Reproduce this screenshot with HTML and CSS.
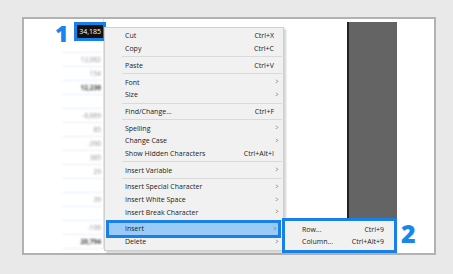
FILE: index.html
```html
<!DOCTYPE html>
<html>
<head>
<meta charset="utf-8">
<link rel="stylesheet" href="styles.css">
</head>
<body>
<div class="panel">
  <div class="numbers">
    <div class="row"><span class="sel">34,185</span></div>
    <div class="row"></div>
    <div class="row">12,082</div>
    <div class="row">154</div>
    <div class="row total">12,236</div>
    <div class="row"></div>
    <div class="row">-6,669</div>
    <div class="row">85</div>
    <div class="row">-390</div>
    <div class="row">385</div>
    <div class="row">29</div>
    <div class="row"></div>
    <div class="row">39</div>
    <div class="row"></div>
    <div class="row">-106</div>
    <div class="row total">20,794</div>
  </div>
  <div class="dark"></div>

  <div class="callout c1">1</div>

  <div class="menu">
    <div class="item"><span class="lbl">Cut</span><span class="key">Ctrl+X</span><span class="arr"></span></div>
    <div class="item"><span class="lbl">Copy</span><span class="key">Ctrl+C</span><span class="arr"></span></div>
    <div class="sep"></div>
    <div class="item"><span class="lbl">Paste</span><span class="key">Ctrl+V</span><span class="arr"></span></div>
    <div class="sep"></div>
    <div class="item"><span class="lbl">Font</span><span class="key"></span><span class="arr">&gt;</span></div>
    <div class="item"><span class="lbl">Size</span><span class="key"></span><span class="arr">&gt;</span></div>
    <div class="sep"></div>
    <div class="item"><span class="lbl">Find/Change...</span><span class="key">Ctrl+F</span><span class="arr"></span></div>
    <div class="sep"></div>
    <div class="item"><span class="lbl">Spelling</span><span class="key"></span><span class="arr">&gt;</span></div>
    <div class="item"><span class="lbl">Change Case</span><span class="key"></span><span class="arr">&gt;</span></div>
    <div class="item"><span class="lbl">Show Hidden Characters</span><span class="key">Ctrl+Alt+I</span><span class="arr"></span></div>
    <div class="sep"></div>
    <div class="item"><span class="lbl">Insert Variable</span><span class="key"></span><span class="arr">&gt;</span></div>
    <div class="sep"></div>
    <div class="item"><span class="lbl">Insert Special Character</span><span class="key"></span><span class="arr">&gt;</span></div>
    <div class="item"><span class="lbl">Insert White Space</span><span class="key"></span><span class="arr">&gt;</span></div>
    <div class="item"><span class="lbl">Insert Break Character</span><span class="key"></span><span class="arr">&gt;</span></div>
    <div class="sep"></div>
    <div class="item active"><span class="lbl">Insert</span><span class="key"></span><span class="arr">&gt;</span></div>
    <div class="item"><span class="lbl">Delete</span><span class="key"></span><span class="arr">&gt;</span></div>
  </div>

  <div class="submenu">
    <div class="sitem"><span class="lbl">Row...</span><span class="key">Ctrl+9</span></div>
    <div class="sitem"><span class="lbl">Column...</span><span class="key">Ctrl+Alt+9</span></div>
  </div>

  <div class="callout c2">2</div>
</div>
</body>
</html>
```

FILE: styles.css
```css
html, body {
  margin: 0;
  padding: 0;
}
body {
  width: 453px;
  height: 274px;
  background: #e9e9e9;
  font-family: "Open Sans", "Noto Sans", sans-serif;
  overflow: hidden;
}
.panel {
  position: relative;
  margin: 17px 0 0 22px;
  width: 410px;
  height: 234px;
  border: 2px solid #b2b2b2;
  background: #ffffff;
  display: flex;
  align-items: flex-start;
}
.numbers {
  margin-left: 38px;
  padding-top: 6px;
  width: 41px;
  border-right: 1px solid #d6e4f6;
  display: flex;
  flex-direction: column;
}
.row {
  height: 13px;
  border-bottom: 1px solid #e6eef9;
  text-align: right;
  padding-right: 2px;
  font-size: 6.5px;
  line-height: 13px;
  color: #8f8f8f;
  filter: blur(0.8px);
}
.row:first-child {
  filter: none;
  border-bottom-color: #ffffff;
}
.row.total {
  color: #3a3a3a;
  font-weight: 700;
}
.sel {
  display: inline-block;
  background: #111;
  color: #fff;
  font-size: 7px;
  line-height: 11px;
  padding: 0 1px;
  margin-right: -1px;
  box-shadow: 0 0 0 1px #111, 0 0 0 4px #1880e8;
}
.dark {
  margin-left: auto;
  margin-right: 37px;
  margin-top: 3px;
  width: 48px;
  height: 222px;
  background: #646464;
  border-left: 2px solid #222;
}
.callout {
  position: absolute;
  color: #1a85ea;
  font-family: "Open Sans", sans-serif;
  font-weight: 800;
  font-size: 23px;
  line-height: 1;
}
.c1 {
  left: 31px;
  top: 3px;
}
.c2 {
  left: 377px;
  top: 202px;
  font-size: 25px;
}
.menu {
  position: absolute;
  left: 80px;
  top: 8px;
  width: 178px;
  padding: 1.6px 0 2px;
  background: #f1f1f1;
  border: 1px solid #cfcfcf;
  box-shadow: 2px 2px 2px rgba(0, 0, 0, 0.18);
  font-size: 7px;
  color: #1b1b1b;
}
.item {
  height: 12.7px;
  display: flex;
  align-items: center;
  padding: 0 3px 0 20px;
}
.item .lbl {
  flex: 1;
}
.item .key {
  text-align: right;
}
.item .arr {
  width: 6px;
  text-align: center;
  color: #777;
  font-size: 5.5px;
  transform: scaleY(1.2);
}
.item.active {
  background: #99cbf6;
  margin: 0 5px 0 4px;
  padding-left: 16px;
  padding-right: 0;
  box-shadow: 0 0 0 3px #1880e8;
  position: relative;
}
.sep {
  height: 1px;
  margin: 1.5px 1px 1.5px 17px;
  background: #dadada;
}
.submenu {
  position: absolute;
  left: 258px;
  top: 199px;
  width: 109px;
  padding: 2px 0;
  background: #f1f1f1;
  border: 3px solid #1880e8;
  font-size: 7px;
  color: #1b1b1b;
}
.sitem {
  height: 12.5px;
  display: flex;
  align-items: center;
  padding: 0 10px 0 17px;
}
.sitem .lbl {
  flex: 1;
}
```
